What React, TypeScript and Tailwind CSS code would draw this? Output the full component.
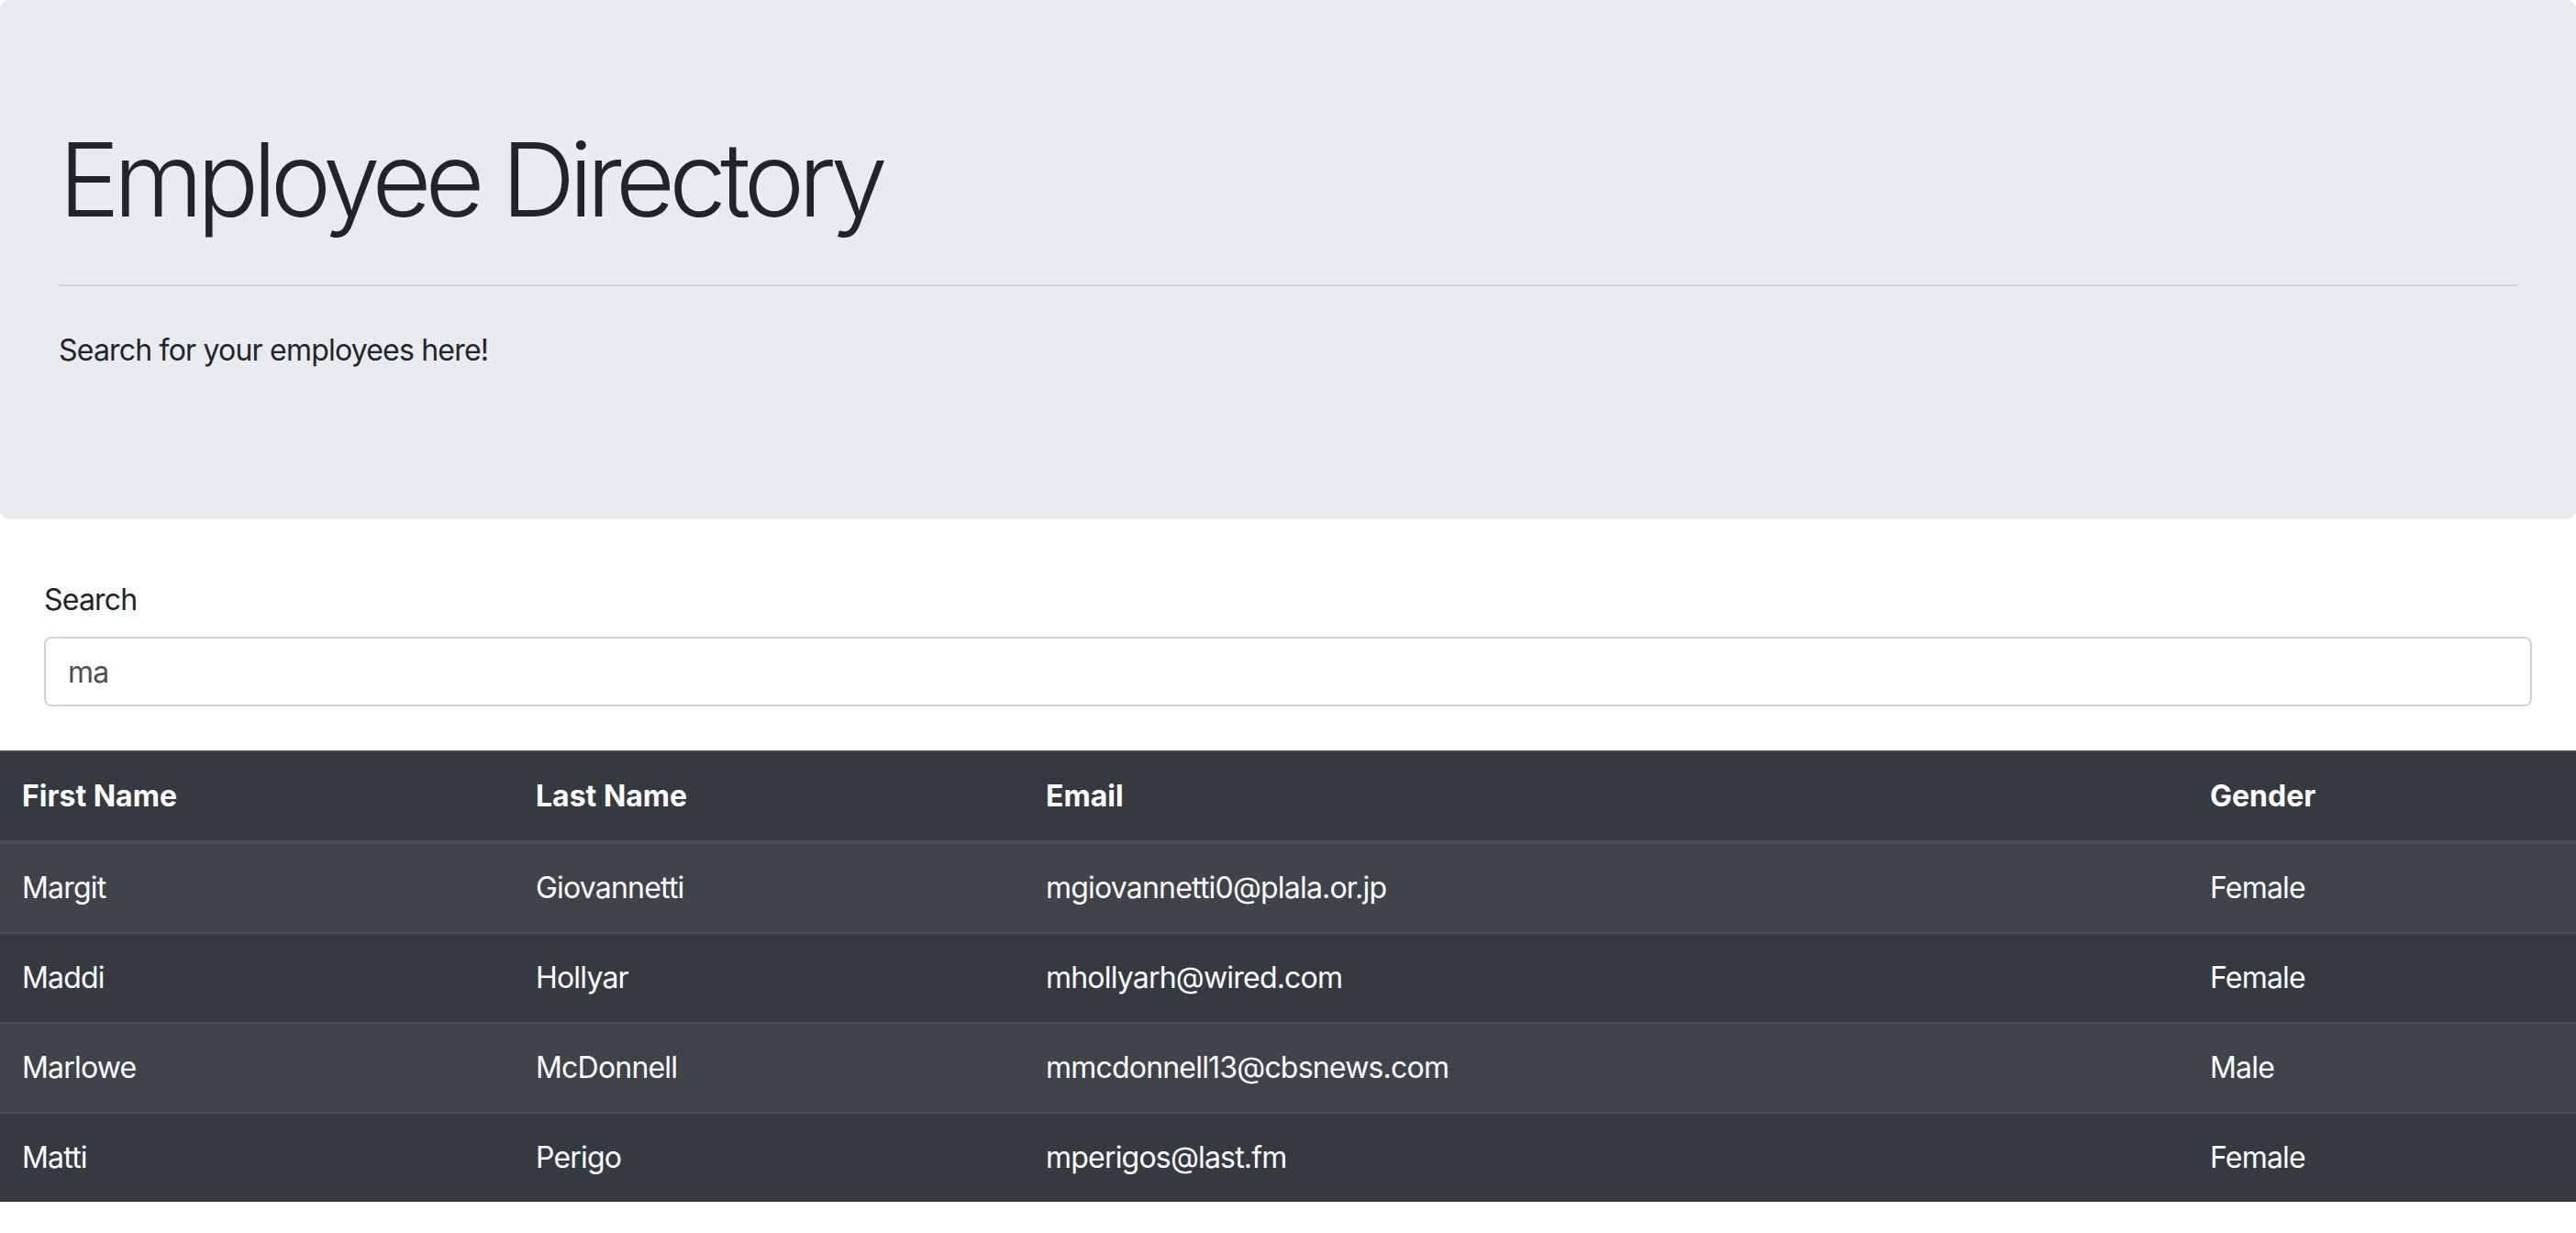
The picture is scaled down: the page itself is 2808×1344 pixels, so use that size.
const employees = [
  { first: "Margit", last: "Giovannetti", email: "mgiovannetti0@plala.or.jp", gender: "Female" },
  { first: "Maddi", last: "Hollyar", email: "mhollyarh@wired.com", gender: "Female" },
  { first: "Marlowe", last: "McDonnell", email: "mmcdonnell13@cbsnews.com", gender: "Male" },
  { first: "Matti", last: "Perigo", email: "mperigos@last.fm", gender: "Female" },
];

export default function App() {
  return (
    <div className="min-h-screen bg-white text-[#212529] font-['Inter',sans-serif]">
      {/* Jumbotron */}
      <div className="mb-[64px] rounded-[10px] bg-[#e9ecef] px-16 pt-32 pb-32">
        <h1 className="mb-4 text-[112px] font-light leading-[1.2] tracking-[-6.8px]">Employee Directory</h1>
        <hr className="mt-[48px] mb-[46px] border-t-2 border-black/10" />
        <p className="mb-8 text-[32px] leading-[48px] tracking-[-0.8px]">Search for your employees here!</p>
      </div>

      {/* Search */}
      <div className="mb-12 px-12">
        <label className="mb-4 block text-[32px] leading-[48px] tracking-[-0.8px]">Search</label>
        <input
          type="text"
          defaultValue="ma"
          className="block h-[76px] w-full rounded-lg border-2 border-[#ced4da] bg-white px-6 text-[32px] tracking-[-0.8px] text-[#495057] outline-none"
        />
      </div>

      {/* Table */}
      <table className="w-full table-fixed bg-[#343a40] text-[32px] leading-[48px] text-white">
        <colgroup>
          <col className="w-[560px]" />
          <col className="w-[556px]" />
          <col className="w-[1269px]" />
          <col />
        </colgroup>
        <thead>
          <tr>
            <th className="border-t-2 border-b-4 border-[#454d55] p-6 text-left font-bold">First Name</th>
            <th className="border-t-2 border-b-4 border-[#454d55] p-6 text-left font-bold">Last Name</th>
            <th className="border-t-2 border-b-4 border-[#454d55] p-6 text-left font-bold">Email</th>
            <th className="border-t-2 border-b-4 border-[#454d55] p-6 text-left font-bold">Gender</th>
          </tr>
        </thead>
        <tbody className="tracking-[-0.8px]">
          {employees.map((e, i) => (
            <tr key={e.email} className={i % 2 === 0 ? "bg-[#3e444a]" : ""}>
              <td className="border-t-2 border-[#454d55] p-6">{e.first}</td>
              <td className="border-t-2 border-[#454d55] p-6">{e.last}</td>
              <td className="border-t-2 border-[#454d55] p-6">{e.email}</td>
              <td className="border-t-2 border-[#454d55] p-6">{e.gender}</td>
            </tr>
          ))}
        </tbody>
      </table>
    </div>
  );
}
